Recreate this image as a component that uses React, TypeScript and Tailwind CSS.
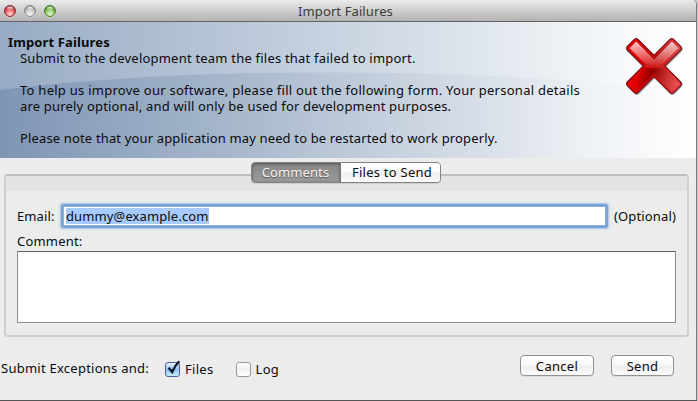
import type { ReactNode } from "react";

function Light({ edge, fill }: { edge: string; fill: string }) {
  return (
    <svg width="14" height="14" viewBox="0 0 14 14">
      <defs>
        <radialGradient id={"l" + edge.slice(1)} cx="50%" cy="78%" r="70%">
          <stop offset="0" stopColor="#fff" stopOpacity=".75" />
          <stop offset=".55" stopColor={fill} />
          <stop offset="1" stopColor={edge} />
        </radialGradient>
        <linearGradient id={"g" + edge.slice(1)} x2="0" y2="1">
          <stop offset="0" stopColor="#fff" stopOpacity=".9" />
          <stop offset="1" stopColor="#fff" stopOpacity="0" />
        </linearGradient>
      </defs>
      <circle cx="7" cy="7.5" r="6" fill="#fff" opacity=".6" />
      <circle cx="7" cy="7" r="5.5" fill={fill} />
      <circle cx="7" cy="7" r="5.5" fill={`url(#l${edge.slice(1)})`} stroke={edge} strokeWidth="1" />
      <ellipse cx="7" cy="4.4" rx="3" ry="1.9" fill={`url(#g${edge.slice(1)})`} />
    </svg>
  );
}

function HeaderArt() {
  return (
    <svg className="absolute inset-0" width="696" height="136" viewBox="0 22 696 136">
      <defs>
        <linearGradient id="sky" x2="1">
          <stop offset="0" stopColor="#98abc4" />
          <stop offset=".33" stopColor="#b8c6d8" />
          <stop offset=".67" stopColor="#dde4ec" />
          <stop offset=".85" stopColor="#f2f5f8" />
          <stop offset="1" stopColor="#fff" />
        </linearGradient>
        <linearGradient id="hill" x2="1">
          <stop offset="0" stopColor="#7e95b4" />
          <stop offset=".33" stopColor="#a6b7cc" />
          <stop offset=".67" stopColor="#d5dce6" />
          <stop offset=".85" stopColor="#eff2f6" />
          <stop offset="1" stopColor="#fff" />
        </linearGradient>
      </defs>
      <rect y="22" width="696" height="136" fill="url(#sky)" />
      <path d="M0 90C110 77 210 72.5 320 72.5C450 72.5 570 78 696 91V158H0Z" fill="url(#hill)" />
    </svg>
  );
}

const CROSS =
  "M10.2 3.6L28 21.4L45.8 3.6L52.4 10.2L34.6 28L52.4 45.8L45.8 52.4L28 34.6L10.2 52.4L3.6 45.8L21.4 28L3.6 10.2Z";

function Cross() {
  return (
    <svg width="60" height="60" viewBox="-2 -1 60 60">
      <defs>
        <linearGradient id="red" gradientUnits="userSpaceOnUse" x1="0" y1="20" x2="56" y2="34">
          <stop offset="0" stopColor="#f00000" />
          <stop offset=".28" stopColor="#dd0000" />
          <stop offset=".5" stopColor="#8f0000" />
          <stop offset=".72" stopColor="#c02828" />
          <stop offset="1" stopColor="#f05858" />
        </linearGradient>
        <linearGradient id="rim" gradientUnits="userSpaceOnUse" x1="0" y1="0" x2="56" y2="0">
          <stop offset="0" stopColor="#e80000" />
          <stop offset=".5" stopColor="#c80c0c" />
          <stop offset="1" stopColor="#ea444c" />
        </linearGradient>
        <linearGradient id="shine" gradientUnits="userSpaceOnUse" x1="0" y1="2" x2="0" y2="30">
          <stop offset="0" stopColor="#fff" stopOpacity=".85" />
          <stop offset=".6" stopColor="#f08080" stopOpacity=".75" />
          <stop offset="1" stopColor="#d81010" stopOpacity=".85" />
        </linearGradient>
      </defs>
      <path d={CROSS} fill="none" stroke="#666" strokeWidth="7" strokeLinejoin="round" transform="translate(.7 1)" opacity=".55" />
      <path d={CROSS} fill="#b00" stroke="#7c1118" strokeWidth="7" strokeLinejoin="round" />
      <path d={CROSS} fill="url(#rim)" stroke="url(#rim)" strokeWidth="4.6" strokeLinejoin="round" />
      <path d={CROSS} fill="url(#red)" stroke="url(#red)" strokeWidth="1.2" strokeLinejoin="round" />
      <path
        d="M10.2 3.6L28 21.4L45.8 3.6L52.4 10.2L36 26.6Q36 28.6 37 29.6Q28 31 19 29.6Q20 28.6 20 26.6L3.6 10.2Z"
        fill="url(#shine)"
      />
    </svg>
  );
}

function Check({ on, label }: { on?: boolean; label: string }) {
  return (
    <label className="flex items-center gap-[5px] tracking-[0.3px]">
      <span
        className={
          on
            ? "relative h-[15px] w-[15px] rounded-[3px] border border-[#50609a] bg-linear-to-b from-[#eaf3fc] via-[#8fc0f0] to-[#c9efff]"
            : "relative h-[15px] w-[15px] rounded-[3px] border border-[#999] bg-linear-to-b from-white via-[#f0f0f0] to-white"
        }
      >
        {on && (
          <svg className="absolute -top-[3px] -left-px" width="17" height="17" viewBox="0 0 17 17">
            <path d="M3.6 7.8L7.2 12Q10 5.5 14.3 1.3" fill="none" stroke="#081326" strokeWidth="2.3" />
          </svg>
        )}
      </span>
      <span>{label}</span>
    </label>
  );
}

function Button({ className, children }: { className: string; children: ReactNode }) {
  return (
    <button
      className={
        "h-[21px] rounded-[4px] border border-[#929292] bg-[linear-gradient(#fff,#f8f8f8_48%,#eeeeee_52%,#fafafa)] text-center leading-[18px] shadow-[0_1px_0_#dadada] " +
        className
      }
    >
      {children}
    </button>
  );
}

export default function App() {
  return (
    <div className="flex h-[401px] w-[698px] flex-col overflow-hidden bg-[#c5c8cc] font-['Noto_Sans',sans-serif] text-[13px] leading-4 text-[#0b0b0b]">
      <div className="flex h-[400px] w-[697px] flex-col rounded-tr-[5px] border-r border-[#777] bg-[#ececec]">
        <header className="grid h-[22px] shrink-0 grid-cols-[1fr_auto_1fr] items-center rounded-tr-[5px] border-b border-[#636363] bg-linear-to-b from-[#ebebeb] to-[#b3b3b3]">
          <div className="flex gap-[6px] pl-[3px]">
            <Light edge="#8f3034" fill="#f26267" />
            <Light edge="#878787" fill="#d0d0d0" />
            <Light edge="#4c7d30" fill="#8ccb66" />
          </div>
          <h1 className="pr-[5px] tracking-[0.1px] text-[#3b3b3b]">Import Failures</h1>
        </header>

        <section className="relative h-[136px] shrink-0">
          <HeaderArt />
          <div className="relative flex justify-between pt-[12px] pr-[2px] pl-2">
            <div className="whitespace-nowrap">
              <h2 className="font-bold tracking-[0.13px]">Import Failures</h2>
              <div className="flex flex-col gap-4 pl-3">
                <p className="tracking-[0.21px]">
                  Submit to the development team the files that failed to import.
                </p>
                <div>
                  <p className="tracking-[0.26px]">
                    To help us improve our software, please fill out the following form. Your personal details
                  </p>
                  <p className="tracking-[0.18px]">
                    are purely optional, and will only be used for development purposes.
                  </p>
                </div>
                <p className="tracking-[0.15px]">
                  Please note that your application may need to be restarted to work properly.
                </p>
              </div>
            </div>
            <div className="mt-[3px] mr-[10px]">
              <Cross />
            </div>
          </div>
        </section>

        <main className="flex flex-col px-1 pt-[4px]">
          <div className="z-10 mr-[5px] flex h-[21px] w-[190px] self-center rounded-[4px] border border-[#828282] text-center leading-[18px] shadow-[0_1px_0_#cfcfcf]">
            <div className="w-[88px] rounded-l-[3px] bg-linear-to-b from-[#858585] to-[#9b9b9b] tracking-[0.1px] text-[#f4f4f4] shadow-[inset_0_1px_3px_#555] [text-shadow:0_1px_1px_#555]">
              Comments
            </div>
            <div className="flex-1 rounded-r-[3px] border-l border-[#777] bg-[linear-gradient(#fff,#fbfbfb_48%,#f0f0f0_52%,#fafafa)] pl-[4px] tracking-[0.25px]">
              Files to Send
            </div>
          </div>
          <div className="-mt-[9px] mr-[3px] h-[163px] rounded-[4px] border-2 border-[#cfcfcf] border-t-[#bdbdbd] border-b-[#cecece]">
            <div className="h-[15px] bg-[#e3e3e3]" />
            <div className="flex items-center pt-[15px] pl-[11px]">
              <span className="w-[46px] tracking-[0.1px]">Email:</span>
              <div className="flex h-5 w-[543px] items-center rounded-[1px] border border-[#8aaede] bg-white pl-[2px] shadow-[0_0_0_2px_#78a4d5,0_0_2px_3px_#a4c3e5]">
                <span className="w-[143px] bg-[#a8cbff] tracking-[0.12px]">dummy@example.com</span>
              </div>
              <span className="ml-[8px] tracking-[0.15px]">(Optional)</span>
            </div>
            <div className="mt-[7px] ml-[11px] tracking-[0.2px]">Comment:</div>
            <div className="mt-[2px] ml-[11px] h-[72px] w-[659px] border border-[#8d8d8d] border-t-[#626262] bg-white" />
          </div>
        </main>

        <footer className="flex items-start pt-[18px] pl-px">
          <span className="mt-[5px] w-[164px] tracking-[0.25px]">Submit Exceptions and:</span>
          <div className="mt-[6px] flex w-[355px] gap-[22px]">
            <Check on label="Files" />
            <Check label="Log" />
          </div>
          <Button className="w-[74px] tracking-[0.3px]">Cancel</Button>
          <Button className="ml-[17px] w-[63px] tracking-[0.3px]">Send</Button>
        </footer>
      </div>
      <div className="h-px w-[697px] bg-[#555]" />
    </div>
  );
}
